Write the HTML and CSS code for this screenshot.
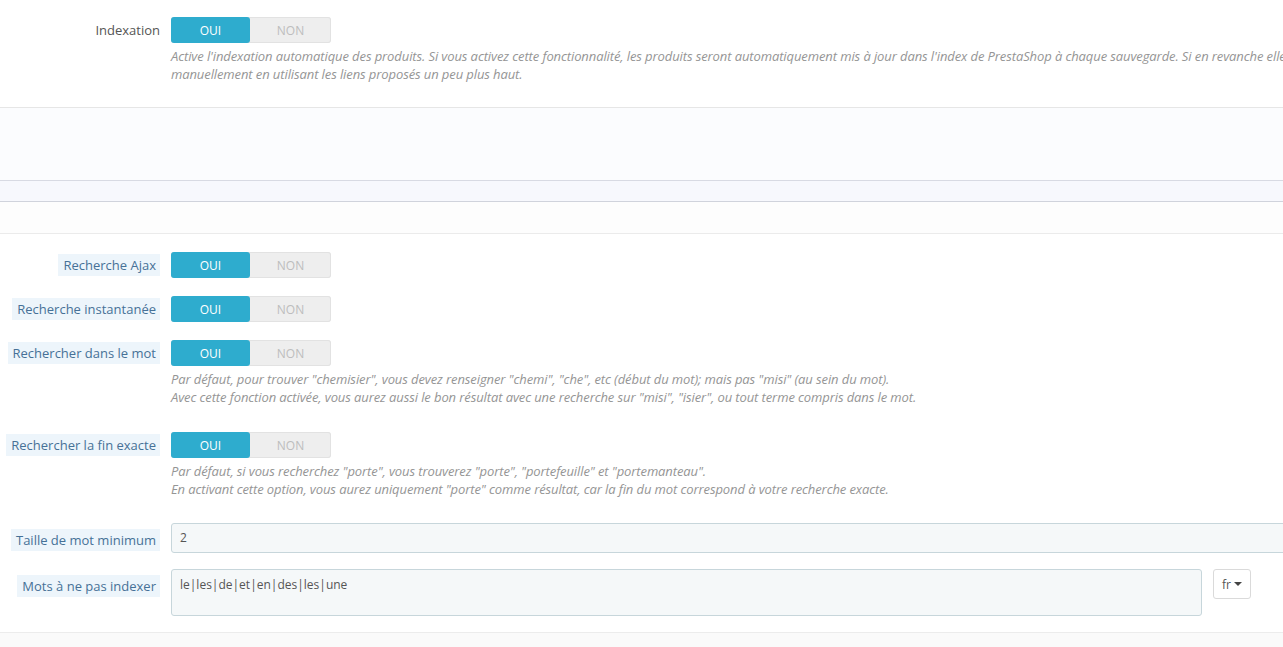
FILE: index.html
```html
<!DOCTYPE html>
<html lang="fr">
<head>
<meta charset="utf-8">
<title>Recherche</title>
<link rel="stylesheet" href="styles.css">
</head>
<body>
<div class="page">
  <section class="panel top">
    <div class="row row-top">
      <div class="label"><span class="plain">Indexation</span></div>
      <div class="field">
        <div class="switch"><span class="on">OUI</span><span class="off">NON</span></div>
        <p class="help help-top">Active l'indexation automatique des produits. Si vous activez cette fonctionnalité, les produits seront automatiquement mis à jour dans l'index de PrestaShop à chaque sauvegarde. Si en revanche elle est désactivée, vous devrez mettre à jour l'index<br>manuellement en utilisant les liens proposés un peu plus haut.</p>
      </div>
    </div>
  </section>
  <div class="footer-area"></div>
  <div class="band"></div>
  <div class="head-area"></div>
  <section class="panel form">
    <div class="row">
      <div class="label"><span class="tip">Recherche Ajax</span></div>
      <div class="field"><div class="switch"><span class="on">OUI</span><span class="off">NON</span></div></div>
    </div>
    <div class="row">
      <div class="label"><span class="tip">Recherche instantanée</span></div>
      <div class="field"><div class="switch"><span class="on">OUI</span><span class="off">NON</span></div></div>
    </div>
    <div class="row">
      <div class="label"><span class="tip">Rechercher dans le mot</span></div>
      <div class="field">
        <div class="switch"><span class="on">OUI</span><span class="off">NON</span></div>
        <p class="help">Par défaut, pour trouver "chemisier", vous devez renseigner "chemi", "che", etc (début du mot); mais pas "misi" (au sein du mot).<br>Avec cette fonction activée, vous aurez aussi le bon résultat avec une recherche sur "misi", "isier", ou tout terme compris dans le mot.</p>
      </div>
    </div>
    <div class="row row-last-switch">
      <div class="label"><span class="tip">Rechercher la fin exacte</span></div>
      <div class="field">
        <div class="switch"><span class="on">OUI</span><span class="off">NON</span></div>
        <p class="help">Par défaut, si vous recherchez "porte", vous trouverez "porte", "portefeuille" et "portemanteau".<br>En activant cette option, vous aurez uniquement "porte" comme résultat, car la fin du mot correspond à votre recherche exacte.</p>
      </div>
    </div>
    <div class="row row-input">
      <div class="label label-input"><span class="tip">Taille de mot minimum</span></div>
      <div class="field"><div class="input">2</div></div>
    </div>
    <div class="row row-input">
      <div class="label label-input"><span class="tip">Mots à ne pas indexer</span></div>
      <div class="field field-lang">
        <div class="textarea">le|les|de|et|en|des|les|une</div>
        <div class="lang">fr <span class="caret"></span></div>
      </div>
    </div>
  </section>
  <div class="bottom"></div>
</div>
</body>
</html>
```
FILE: styles.css
```css
html, body {
  margin: 0;
  padding: 0;
  background: #fff;
  overflow: hidden;
}
body {
  font-family: "Open Sans", "DejaVu Sans", sans-serif;
  font-size: 13px;
  color: #555;
}
.page {
  width: 1320px;
  overflow: hidden;
}
.panel {
  background: #fff;
}
.top {
  padding: 17px 0 24px;
  border-bottom: 1px solid #e6e6e6;
}
.footer-area {
  height: 72px;
  background: #fbfcfe;
  border-bottom: 1px solid #d8dae3;
}
.band {
  height: 20px;
  background: #f7f8fd;
  border-bottom: 1px solid #d0d3dc;
}
.head-area {
  height: 31px;
  background: #fdfdfd;
  border-bottom: 1px solid #ebebeb;
}
.form {
  padding: 18px 0 0;
  border-bottom: 1px solid #ececec;
}
.bottom {
  height: 30px;
  background: #fafafa;
}
.row {
  display: grid;
  grid-template-columns: 160px 1fr;
  column-gap: 11px;
  margin-bottom: 18px;
}
.row-top {
  margin-bottom: 0;
}
.row-last-switch {
  margin-bottom: 17px;
}
.row-input {
  margin-bottom: 16px;
}
.label {
  display: flex;
  justify-content: flex-end;
  align-items: flex-start;
  padding-top: 2px;
}
.label-input {
  padding-top: 6px;
}
.plain {
  line-height: 22px;
  color: #555;
}
.tip {
  line-height: 22px;
  padding: 0 4px 0 5px;
  background: #edf5fb;
  color: #467197;
  white-space: nowrap;
}
.switch {
  display: flex;
  width: 160px;
  height: 26px;
  border-radius: 3px;
  background: #eeeeee;
  box-shadow: inset 0 0 0 1px #e2e2e2;
  font-size: 12px;
  text-transform: uppercase;
}
.switch span {
  flex: 1;
  display: flex;
  align-items: center;
  justify-content: center;
}
.switch .on {
  background: #2eacce;
  color: #fff;
  border-radius: 3px;
  flex: 0 0 79px;
}
.switch .off {
  color: #bdbdbd;
}
.help {
  margin: 5px 0 8px;
  font-style: italic;
  font-size: 13px;
  line-height: 17.5px;
  letter-spacing: -0.1px;
  color: #959595;
  white-space: nowrap;
}
.help-top {
  margin-bottom: 0;
}
.input {
  height: 30px;
  box-sizing: border-box;
  padding: 0 8px;
  line-height: 28px;
  background: #f5f8f9;
  border: 1px solid #c7d6db;
  border-radius: 3px;
  color: #555;
  font-size: 12px;
}
.field-lang {
  display: flex;
  align-items: flex-start;
  gap: 11px;
}
.textarea {
  width: 1031px;
  height: 47px;
  box-sizing: border-box;
  padding: 7px 8px;
  background: #f5f8f9;
  border: 1px solid #c7d6db;
  border-radius: 3px;
  color: #555;
  font-size: 12px;
  line-height: 16px;
}
.lang {
  width: 38px;
  height: 30px;
  box-sizing: border-box;
  border: 1px solid #dadada;
  border-radius: 3px;
  background: #fff;
  font-size: 12px;
  display: flex;
  align-items: center;
  justify-content: center;
  gap: 3px;
  color: #555;
}
.caret {
  width: 0;
  height: 0;
  border-left: 4px solid transparent;
  border-right: 4px solid transparent;
  border-top: 4px solid #444;
}
```
